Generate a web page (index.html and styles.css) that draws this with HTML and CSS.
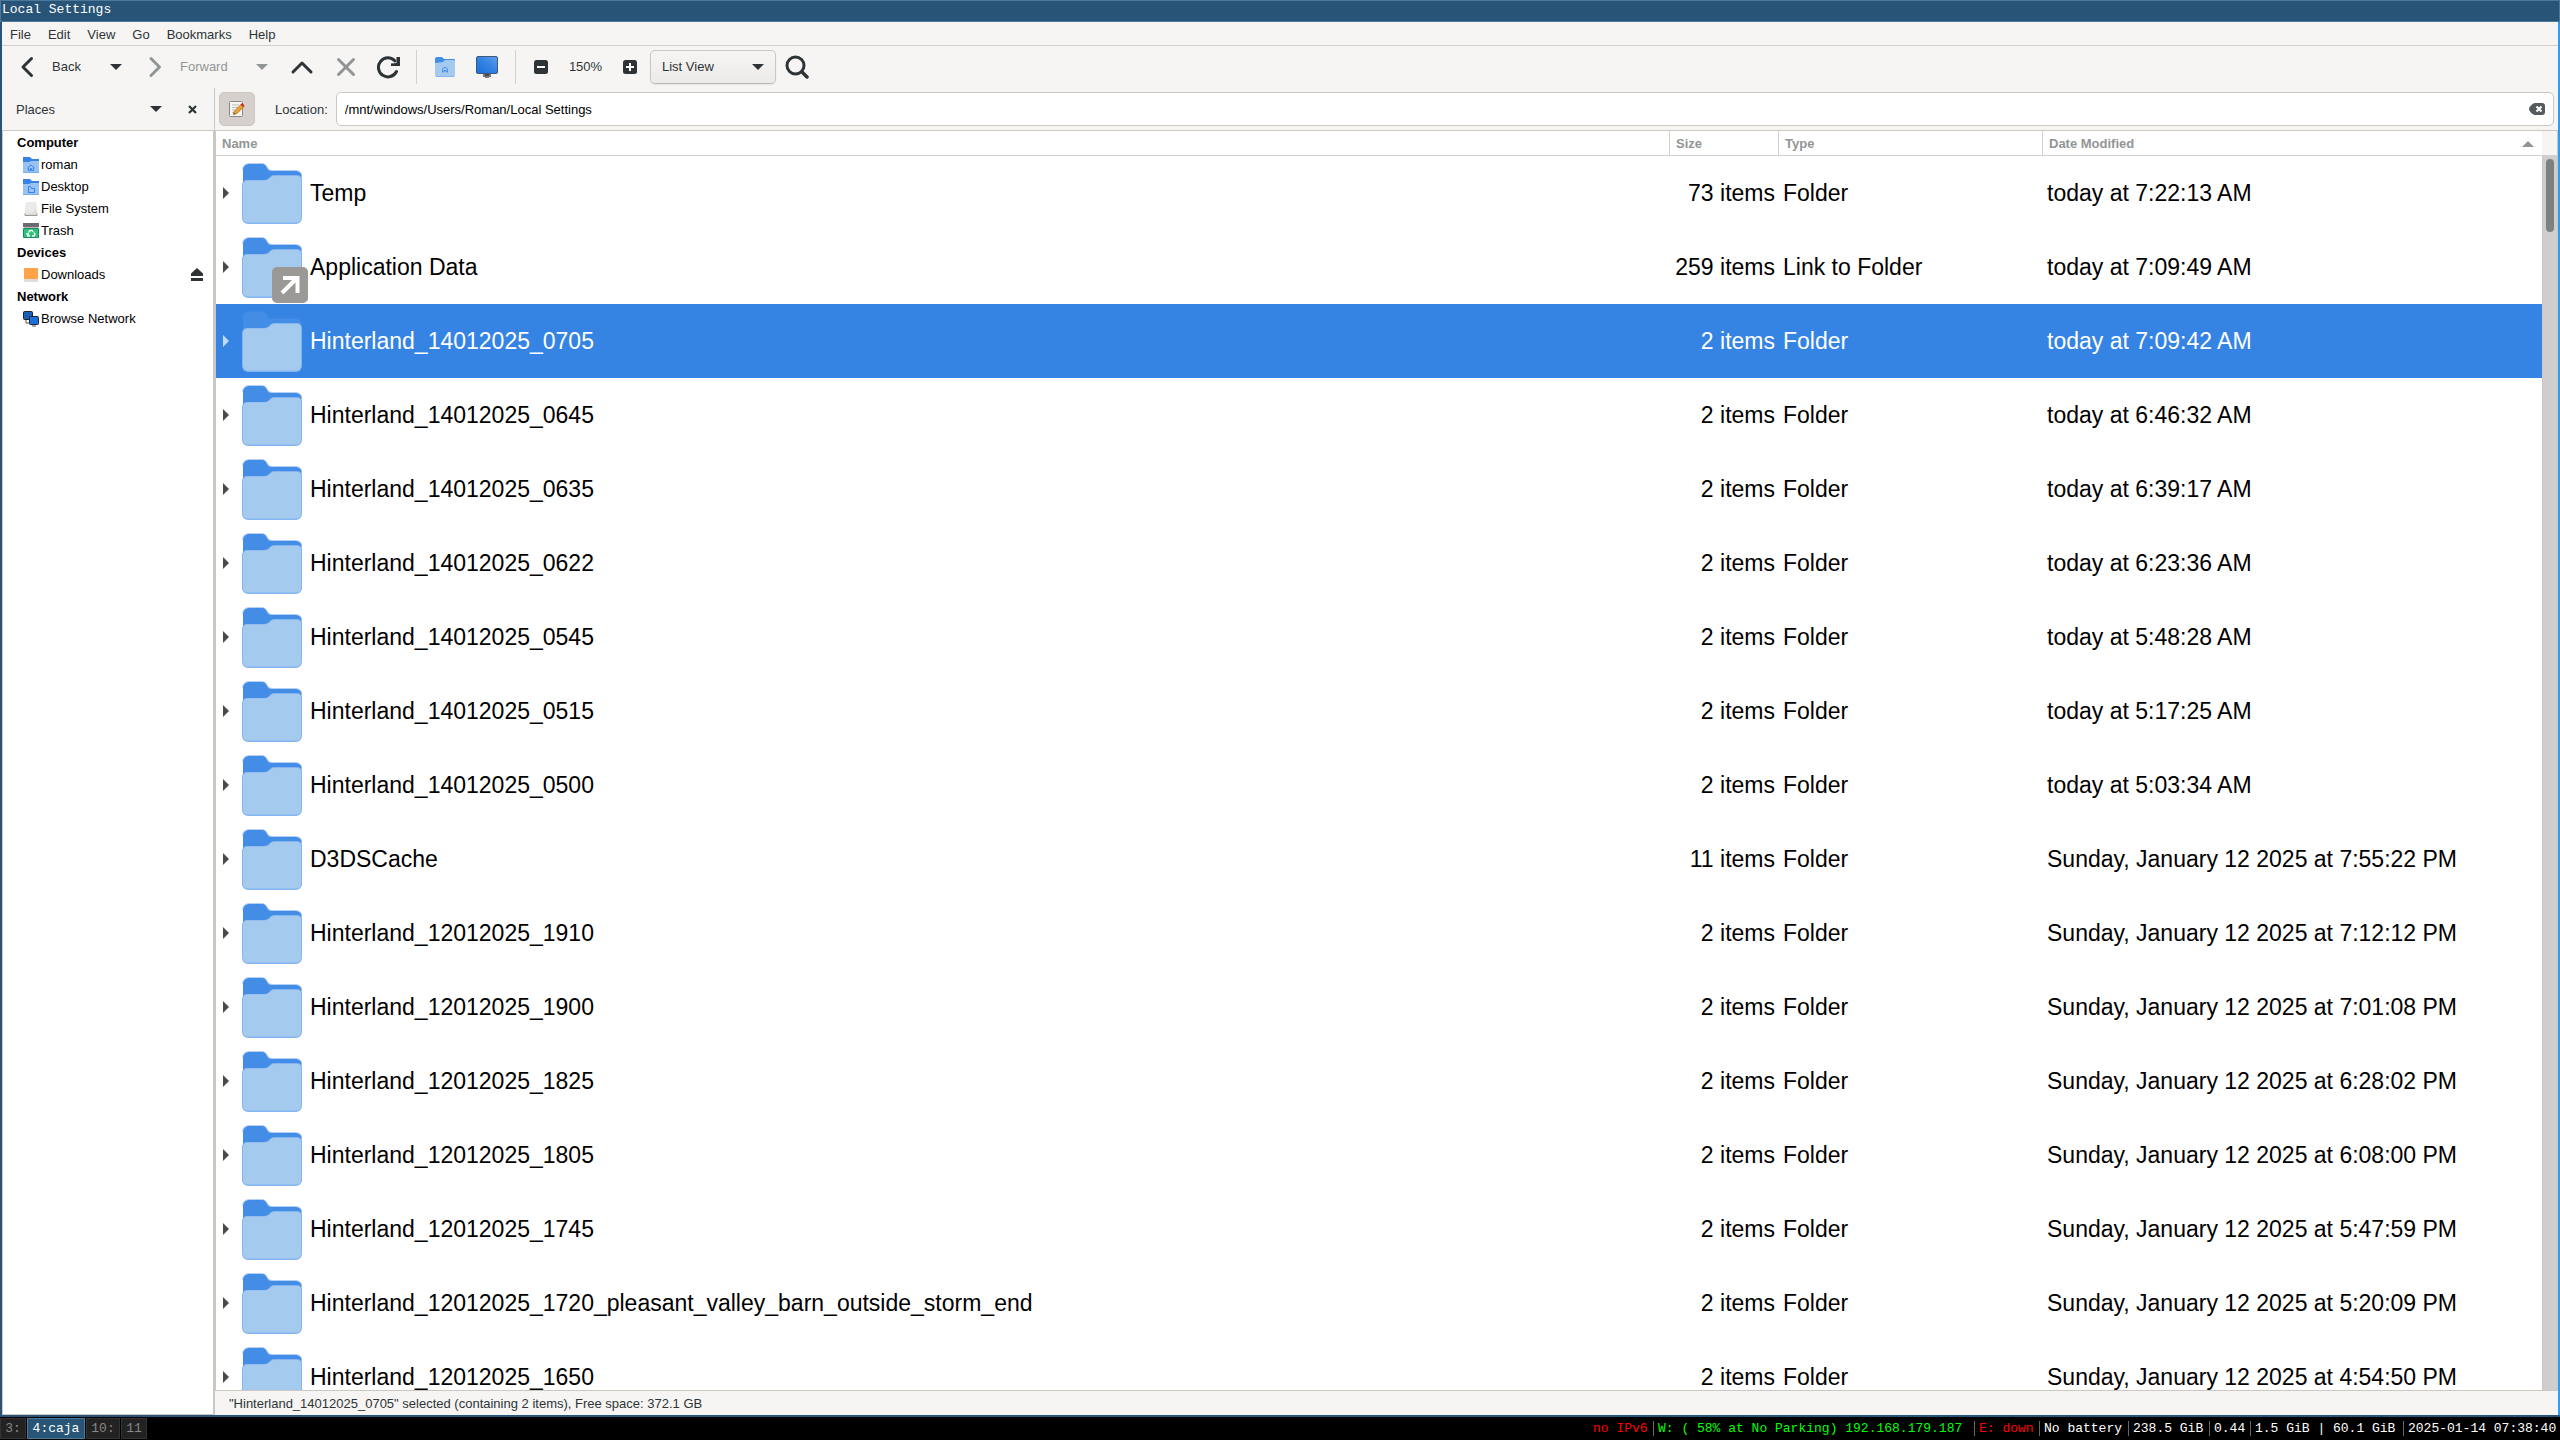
FILE: index.html
```html
<!DOCTYPE html>
<html lang="en">
<head>
<meta charset="utf-8">
<title>Local Settings</title>
<link rel="stylesheet" href="styles.css">
</head>
<body>
<svg class="defs" aria-hidden="true">
  <symbol id="folder" viewBox="0 0 60 61">
    <path d="M1 7a6 6 0 0 1 6-6h13c3 0 4 2 5 4 1 2 2 3 5 3h24a5.500 5.500 0 0 1 5.500 5.500" fill="none" stroke="#438de6" stroke-opacity=".4" stroke-width="2"/>
    <path d="M1 7a6 6 0 0 1 6-6h13c3 0 4 2 5 4 1 2 2 3 5 3h24a5.500 5.500 0 0 1 5.500 5.500V40H1z" fill="#438de6"/>
    <path d="M0 22a5 5 0 0 1 5-5h17c3 0 4-1 5.500-2.500S30 12 32 12h23a5 5 0 0 1 5 5v38a6 6 0 0 1-6 6H6a6 6 0 0 1-6-6z" fill="#84b5f0"/>
    <path d="M1 22a4.500 4.500 0 0 1 4.500-4.500H22c3 0 4.500-1 6-2.500s2.500-2 4-2h23a4 4 0 0 1 4 4v38a5 5 0 0 1-5 4.500H6A5 5 0 0 1 1 55z" fill="#a4caee"/>
  </symbol>
  <symbol id="tri" viewBox="0 0 12 6"><path d="M0 0h12L6 6z" fill="currentColor"/></symbol>
  <symbol id="expand" viewBox="0 0 6 12"><path d="M0 0l6 6-6 6z" fill="currentColor"/></symbol>
</svg>

<div class="window">
  <header class="titlebar">Local Settings</header>

  <nav class="menubar" aria-label="Menu">
    <button>File</button><button>Edit</button><button>View</button><button>Go</button><button>Bookmarks</button><button>Help</button>
  </nav>

  <div class="toolbar" role="toolbar">
    <button class="nav-btn"><svg width="20" height="22" viewBox="0 0 20 22"><path d="M14.500 2.500L6 11l8.500 8.500" class="stroke"/></svg><span>Back</span></button>
    <button class="drop-btn" aria-label="Back history"><svg width="12" height="6"><use href="#tri"/></svg></button>
    <button class="nav-btn forward" disabled><svg width="20" height="22" viewBox="0 0 20 22"><path d="M6 2.500l8.500 8.500L6 19.500" class="stroke"/></svg><span>Forward</span></button>
    <button class="drop-btn" disabled aria-label="Forward history"><svg width="12" height="6"><use href="#tri"/></svg></button>
    <button class="icon-btn up" aria-label="Up"><svg width="24" height="24" viewBox="0 0 24 24"><path d="M3 17l9-9 9 9" class="stroke"/></svg></button>
    <button class="icon-btn" disabled aria-label="Stop"><svg width="24" height="24" viewBox="0 0 24 24"><path d="M4.500 4.500l15 15m0-15l-15 15" class="stroke"/></svg></button>
    <button class="icon-btn" aria-label="Reload"><svg width="24" height="24" viewBox="0 0 24 24"><path d="M20.500 16.500a9.500 9.500 0 1 1-1.500-10.500" class="stroke"/><path d="M24 2v9h-9v-2.500L20.500 8V2z" fill="currentColor"/></svg></button>
    <span class="sep"></span>
    <button class="icon-btn" aria-label="Home"><svg width="20" height="20" viewBox="0 0 20 20"><path d="M0 2a2 2 0 0 1 2-2h5l2 2h10a1 1 0 0 1 1 1v5H0z" fill="#438de6"/><path d="M0 6l8-1 2-2h8a2 2 0 0 1 2 1v14a2 2 0 0 1-2 2H2a2 2 0 0 1-2-2z" fill="#a4caee"/><path d="M1 19.500h18" stroke="#84b5f0"/><path d="M7 12.500l3-2.500 3 2.500M7.500 12.500v2.500h1.500v-1.500h2v1.500h1.500v-2.500" fill="none" stroke="#438de6"/></svg></button>
    <button class="icon-btn" aria-label="Computer"><svg width="22" height="22" viewBox="0 0 22 22"><defs><linearGradient id="scr" x1="0" y1="1" x2="1" y2="0"><stop offset="0" stop-color="#1a6fdc"/><stop offset=".55" stop-color="#3584e4"/><stop offset="1" stop-color="#62a0ea"/></linearGradient></defs><path d="M7 17h8v4h-2v1H9v-1H7z" fill="#77767b"/><path d="M9 18h4v2H9z" fill="#4c4a50"/><rect x=".5" y=".5" width="21" height="17" rx="1.500" fill="url(#scr)" stroke="#3d5878"/></svg></button>
    <span class="sep"></span>
    <button class="icon-btn zoom-btn" aria-label="Zoom out"><svg width="14" height="14" viewBox="0 0 14 14"><rect width="14" height="14" rx="2.500" fill="#2e3436"/><path d="M3 7h8" stroke="#fff" stroke-width="2"/></svg></button>
    <button class="zoom-value">150%</button>
    <button class="icon-btn zoom-btn" aria-label="Zoom in"><svg width="14" height="14" viewBox="0 0 14 14"><rect width="14" height="14" rx="2.500" fill="#2e3436"/><path d="M3 7h8M7 3v8" stroke="#fff" stroke-width="2"/></svg></button>
    <div class="view-select">
      <select aria-label="View"><option>List View</option><option>Icon View</option><option>Compact View</option></select>
      <svg width="12" height="6"><use href="#tri"/></svg>
    </div>
    <button class="icon-btn search" aria-label="Search"><svg width="24" height="24" viewBox="0 0 24 24"><circle cx="10.500" cy="10.500" r="8.500" fill="none" stroke="currentColor" stroke-width="3"/><path d="M17 17l5 5" stroke="currentColor" stroke-width="3.500" stroke-linecap="round"/></svg></button>
  </div>

  <div class="panes">
    <aside class="sidebar">
      <div class="side-head">
        <span class="side-title">Places</span>
        <button class="drop-btn" aria-label="Choose side pane"><svg width="12" height="6"><use href="#tri"/></svg></button>
        <button class="close-btn" aria-label="Close side pane"><svg width="9" height="9" viewBox="0 0 9 9"><path d="M1 1l7 7m0-7L1 8" stroke="currentColor" stroke-width="2.200"/></svg></button>
      </div>
      <div class="places">
        <h2>Computer</h2>
        <a href="#"><svg width="16" height="16" viewBox="0 0 16 16"><path d="M0 0h7l2 2h7v6H0z" fill="#3584e4"/><path d="M0 5h6l2-1h8v12H0z" fill="#99c1f1"/><path d="M0 15.500h16" stroke="#78aeed"/><path d="M4.500 11L8 8l3.500 3M5.500 10.500v3h2v-2h1v2h2v-3" fill="none" stroke="#3584e4"/></svg>roman</a>
        <a href="#"><svg width="16" height="16" viewBox="0 0 16 16"><path d="M0 0h7l2 2h7v6H0z" fill="#3584e4"/><path d="M0 5h6l2-1h8v12H0z" fill="#99c1f1"/><path d="M0 15.500h16" stroke="#78aeed"/><path d="M5.500 7.500h2l1 2h3v4h-6z" fill="none" stroke="#3584e4"/></svg>Desktop</a>
        <a href="#"><svg width="16" height="16" viewBox="0 0 16 16"><path d="M3 1h10l1 12v1.500H2V13z" fill="#deddda"/><path d="M3 1h10l.5 7-5 4-6 1z" fill="#ebeae8"/><path d="M2 12.500v2h12v-2" fill="none" stroke="#9a9996"/></svg>File System</a>
        <a href="#"><svg width="16" height="16" viewBox="0 0 16 16"><path d="M0 0h16v4H0z" fill="#6c6a70"/><path d="M1 4h14v2H1z" fill="#c0bfbc"/><path d="M.5 5.500h15v9h-15z" fill="#2ec27e" stroke="#1c8a58"/><path d="M5.500 9.500L7 7.500h2l1 1.500M11 9.500l1 2-1 1.500H9M7 13H5l-1-2h2" fill="none" stroke="#fff" stroke-width="1.300"/></svg>Trash</a>
        <h2>Devices</h2>
        <a href="#"><svg width="16" height="16" viewBox="0 0 16 16"><rect x="1" y="1" width="14" height="14" rx="1.500" fill="#deddda"/><rect x="1" y="1" width="14" height="11" rx="1" fill="#ffa348"/></svg>Downloads<svg class="eject" width="12" height="14" viewBox="0 0 12 14"><path d="M6 0l6 5.500V8H0V5.500zM0 10h12v3H0z" fill="#2e3436"/></svg></a>
        <h2>Network</h2>
        <a href="#"><svg width="16" height="16" viewBox="0 0 16 16"><path d="M3 9v3h3M9 15h4" stroke="#555" fill="none"/><rect x=".5" y=".5" width="9" height="8" rx="1" fill="#1a5fb4" stroke="#241f31"/><rect x="6.500" y="5.500" width="9" height="8" rx="1" fill="#1c71d8" stroke="#241f31"/></svg>Browse Network</a>
      </div>
    </aside>

    <main class="main">
      <div class="location">
        <button class="toggle" aria-label="Edit location"><svg width="16" height="16" viewBox="0 0 16 16"><rect x=".5" y=".5" width="13" height="15" rx="1" fill="#f6f6f4" stroke="#888a85"/><path d="M3 4h7M3 6.500h6M3 9h3M3 11.500h2" stroke="#babdb6"/><path d="M4.500 13.500l1-3.500 7-7 2.500 2.500-7 7z" fill="#f0a030" stroke="#a06010" stroke-width=".7"/><path d="M11.500 3.500l1.500-1.500 2.500 2.500-1.500 1.500z" fill="#cc2222"/><path d="M4.500 13.500l.5-1.500 1 1z" fill="#222"/></svg></button>
        <label for="loc">Location:</label>
        <div class="loc-field">
          <input id="loc" type="text" value="/mnt/windows/Users/Roman/Local Settings">
          <button aria-label="Clear"><svg width="16" height="12" viewBox="0 0 16 12"><path d="M5.500 0H13a3 3 0 0 1 3 3v6a3 3 0 0 1-3 3H5.500C3 11 0 8 0 6s3-5 5.500-6z" fill="#555b5d"/><path d="M7.500 3.500l5 5m0-5l-5 5" stroke="#fff" stroke-width="2"/></svg></button>
        </div>
      </div>

      <div class="listview">
        <div class="scroller">
          <table>
            <colgroup><col><col class="c-size"><col class="c-type"><col class="c-date"></colgroup>
            <thead><tr><th>Name</th><th>Size</th><th>Type</th><th><div class="sorted">Date Modified<svg width="12" height="6" viewBox="0 0 12 6"><path d="M0 6h12L6 0z" fill="currentColor"/></svg></div></th></tr></thead>
            <tbody>
              <tr><td><div class="name"><svg class="exp"><use href="#expand"/></svg><svg class="folder"><use href="#folder"/></svg>Temp</div></td><td>73 items</td><td>Folder</td><td>today at 7:22:13 AM</td></tr>
              <tr><td><div class="name"><svg class="exp"><use href="#expand"/></svg><svg class="folder"><use href="#folder"/></svg><svg class="emblem" viewBox="0 0 36 36"><rect width="36" height="36" rx="5" fill="#9a9996"/><path d="M10 26L25 11M11 11h14.500v15" fill="none" stroke="#fff" stroke-width="4"/></svg>Application Data</div></td><td>259 items</td><td>Link to Folder</td><td>today at 7:09:49 AM</td></tr>
              <tr class="selected"><td><div class="name"><svg class="exp"><use href="#expand"/></svg><svg class="folder"><use href="#folder"/></svg>Hinterland_14012025_0705</div></td><td>2 items</td><td>Folder</td><td>today at 7:09:42 AM</td></tr>
              <tr><td><div class="name"><svg class="exp"><use href="#expand"/></svg><svg class="folder"><use href="#folder"/></svg>Hinterland_14012025_0645</div></td><td>2 items</td><td>Folder</td><td>today at 6:46:32 AM</td></tr>
              <tr><td><div class="name"><svg class="exp"><use href="#expand"/></svg><svg class="folder"><use href="#folder"/></svg>Hinterland_14012025_0635</div></td><td>2 items</td><td>Folder</td><td>today at 6:39:17 AM</td></tr>
              <tr><td><div class="name"><svg class="exp"><use href="#expand"/></svg><svg class="folder"><use href="#folder"/></svg>Hinterland_14012025_0622</div></td><td>2 items</td><td>Folder</td><td>today at 6:23:36 AM</td></tr>
              <tr><td><div class="name"><svg class="exp"><use href="#expand"/></svg><svg class="folder"><use href="#folder"/></svg>Hinterland_14012025_0545</div></td><td>2 items</td><td>Folder</td><td>today at 5:48:28 AM</td></tr>
              <tr><td><div class="name"><svg class="exp"><use href="#expand"/></svg><svg class="folder"><use href="#folder"/></svg>Hinterland_14012025_0515</div></td><td>2 items</td><td>Folder</td><td>today at 5:17:25 AM</td></tr>
              <tr><td><div class="name"><svg class="exp"><use href="#expand"/></svg><svg class="folder"><use href="#folder"/></svg>Hinterland_14012025_0500</div></td><td>2 items</td><td>Folder</td><td>today at 5:03:34 AM</td></tr>
              <tr><td><div class="name"><svg class="exp"><use href="#expand"/></svg><svg class="folder"><use href="#folder"/></svg>D3DSCache</div></td><td>11 items</td><td>Folder</td><td>Sunday, January 12 2025 at 7:55:22 PM</td></tr>
              <tr><td><div class="name"><svg class="exp"><use href="#expand"/></svg><svg class="folder"><use href="#folder"/></svg>Hinterland_12012025_1910</div></td><td>2 items</td><td>Folder</td><td>Sunday, January 12 2025 at 7:12:12 PM</td></tr>
              <tr><td><div class="name"><svg class="exp"><use href="#expand"/></svg><svg class="folder"><use href="#folder"/></svg>Hinterland_12012025_1900</div></td><td>2 items</td><td>Folder</td><td>Sunday, January 12 2025 at 7:01:08 PM</td></tr>
              <tr><td><div class="name"><svg class="exp"><use href="#expand"/></svg><svg class="folder"><use href="#folder"/></svg>Hinterland_12012025_1825</div></td><td>2 items</td><td>Folder</td><td>Sunday, January 12 2025 at 6:28:02 PM</td></tr>
              <tr><td><div class="name"><svg class="exp"><use href="#expand"/></svg><svg class="folder"><use href="#folder"/></svg>Hinterland_12012025_1805</div></td><td>2 items</td><td>Folder</td><td>Sunday, January 12 2025 at 6:08:00 PM</td></tr>
              <tr><td><div class="name"><svg class="exp"><use href="#expand"/></svg><svg class="folder"><use href="#folder"/></svg>Hinterland_12012025_1745</div></td><td>2 items</td><td>Folder</td><td>Sunday, January 12 2025 at 5:47:59 PM</td></tr>
              <tr><td><div class="name"><svg class="exp"><use href="#expand"/></svg><svg class="folder"><use href="#folder"/></svg>Hinterland_12012025_1720_pleasant_valley_barn_outside_storm_end</div></td><td>2 items</td><td>Folder</td><td>Sunday, January 12 2025 at 5:20:09 PM</td></tr>
              <tr><td><div class="name"><svg class="exp"><use href="#expand"/></svg><svg class="folder"><use href="#folder"/></svg>Hinterland_12012025_1650</div></td><td>2 items</td><td>Folder</td><td>Sunday, January 12 2025 at 4:54:50 PM</td></tr>
            </tbody>
          </table>
        </div>
        <div class="scrollbar"><div class="corner"></div><div class="track"><div class="thumb"></div></div></div>
      </div>

      <footer class="status">"Hinterland_14012025_0705" selected (containing 2 items), Free space: 372.1 GB</footer>
    </main>
  </div>
</div>

<div class="bar">
  <div class="workspaces"><button class="ws-s">3:</button><button class="ws-l active">4:caja</button><button class="ws-m">10:</button><button class="ws-s">11</button></div>
  <div class="blocks">
    <span class="bad b-ip">no IPv6</span><span class="good b-wifi">W: ( 58% at No Parking) 192.168.179.187</span><span class="bad b-eth">E: down</span><span class="b-bat">No battery</span><span class="b-disk">238.5 GiB</span><span class="b-load">0.44</span><span class="b-mem">1.5 GiB | 60.1 GiB</span><span class="b-date">2025-01-14 07:38:40</span>
  </div>
</div>
</body>
</html>
```
FILE: styles.css
```css
* { box-sizing: border-box; }

body {
  margin: 0;
  height: 100vh;
  display: flex;
  flex-direction: column;
  overflow: hidden;
  background: #000;
  color: #2e3436;
  font: 13px/22px "Liberation Sans", Arial, sans-serif;
}

button, input, select { font: inherit; color: inherit; margin: 0; }
button { display: flex; align-items: center; justify-content: center; padding: 0; border: 0; background: none; }
button:disabled { color: #929595; }
svg { display: block; flex: none; }
.defs { position: absolute; width: 0; height: 0; }
.stroke { fill: none; stroke: currentColor; stroke-width: 3; stroke-linecap: round; stroke-linejoin: round; }

.window {
  flex: 1;
  min-height: 0;
  display: flex;
  flex-direction: column;
  background: #f6f5f4;
  border-bottom: 2px solid #285577;
}

.titlebar {
  height: 22px;
  padding-left: 1px;
  border: 1px solid #4c7899;
  background: #285577;
  color: #fff;
  font: 13px/18px "Liberation Mono", "Courier New", monospace;
}

.menubar, .toolbar, .panes { border-left: 2px solid #285577; border-right: 2px solid #2e9ef4; }

.menubar { display: flex; gap: 17px; height: 24px; padding: 2px 0 0 8px; box-shadow: inset 0 -1px #d5d0cc; }

.toolbar { display: flex; align-items: center; height: 42px; padding: 4px 0; }
.nav-btn { height: 34px; width: 97px; gap: 15px; padding-left: 15px; justify-content: flex-start; }
.nav-btn.forward { width: 112px; padding-left: 12px; }
.drop-btn { width: 34px; height: 34px; }
.icon-btn { width: 42px; height: 34px; }
.icon-btn.up { width: 46px; }
.sep { width: 1px; height: 34px; margin: 0 7px; background: #d5d0cc; }
.zoom-btn { width: 36px; }
.zoom-value { width: 53px; }
.view-select { display: grid; align-items: center; width: 126px; height: 34px; margin-left: 2px; }
.view-select > * { grid-area: 1 / 1; }
.view-select svg { justify-self: end; margin-right: 12px; pointer-events: none; }
.view-select select {
  appearance: none;
  width: 100%;
  height: 34px;
  padding: 0 11px;
  border: 1px solid #cdc7c2;
  border-bottom-color: #bfb8b1;
  border-radius: 5px;
  background: linear-gradient(#f6f5f4, #edebe9);
  box-shadow: 0 1px 2px rgba(0, 0, 0, .07);
}

.panes { flex: 1; min-height: 0; display: flex; }

.sidebar { display: flex; flex-direction: column; width: 212px; flex: none; }
.side-head { display: flex; align-items: center; height: 42px; padding-left: 14px; }
.side-title { flex: 1; padding-top: 1px; }
.close-btn { width: 34px; height: 34px; margin-right: 5px; }
.side-head .drop-btn { width: 38px; }
.places { flex: 1; padding-top: 1px; border: 1px solid #cdc7c2; background: #fff; color: #000; }
.places h2 { margin: 0; padding-left: 14px; font: bold 13px/22px "Liberation Sans", Arial, sans-serif; }
.places a { display: flex; align-items: center; gap: 2px; padding: 0 10px 0 20px; color: inherit; text-decoration: none; }
.places .eject { margin-left: auto; }

.main { flex: 1; min-width: 0; display: flex; flex-direction: column; border-left: 1px solid #cdc7c2; }
.location { display: flex; align-items: center; height: 42px; padding: 0 4px; }
.toggle { width: 36px; height: 34px; border: 1px solid #cdc7c2; border-radius: 5px; background: #d5d0cc; }
.location label { padding: 1px 8px 0 20px; }
.loc-field {
  flex: 1;
  display: flex;
  height: 34px;
  padding: 0 8px;
  border: 1px solid #cdc7c2;
  border-radius: 5px;
  background: #fff;
  color: #000;
}
.loc-field input { flex: 1; min-width: 0; padding: 1px 0 0; border: 0; outline: 0; background: none; }

.listview { flex: 1; min-height: 0; display: flex; border: 1px solid #cdc7c2; border-right: 0; background: #fff; color: #000; }
.scroller { flex: 1; min-width: 0; overflow: hidden; }
table { width: 100%; border-collapse: separate; border-spacing: 0; table-layout: fixed; }
.c-size { width: 109px; }
.c-type { width: 264px; }
.c-date { width: 500px; }
th {
  height: 25px;
  padding: 2px 8px 0 6px;
  border-bottom: 1px solid #d5d0cc;
  border-left: 1px solid #d5d0cc;
  color: #929595;
  text-align: left;
  line-height: 22px;
}
th:first-child { border-left: 0; }
.sorted { display: flex; align-items: center; justify-content: space-between; }
td { height: 74px; padding: 0 3px 0 5px; font-size: 23px; line-height: 28px; white-space: nowrap; }
td:nth-child(2) { text-align: right; }
td:first-child { padding-left: 7px; }
.name { position: relative; display: flex; align-items: center; height: 74px; }
.exp { width: 6px; height: 12px; margin-right: 13px; color: #4a4a4a; }
.folder { width: 60px; height: 61px; margin-right: 8px; }
.emblem { position: absolute; left: 49px; bottom: 1px; width: 36px; height: 36px; }
.selected td { background: #3584e4; color: #fff; }
.selected .exp { color: #c2daf7; }

.scrollbar { display: flex; flex-direction: column; width: 16px; border-right: 1px solid #cdc7c2; }
.corner { height: 25px; background: #f6f5f4; border-bottom: 1px solid #d5d0cc; }
.track { flex: 1; padding: 3px; border-left: 1px solid #cdc7c2; background: #cecece; }
.thumb { width: 8px; height: 73px; border-radius: 4px; background: #7e8182; }

.status { height: 24px; padding: 1px 14px 0; line-height: 24px; }

.bar { display: flex; justify-content: space-between; height: 23px; color: #fff; font: 13px/19px "Liberation Mono", "Courier New", monospace; }
.workspaces { display: flex; gap: 1px; padding: 1px 0; }
.workspaces button { border: 1px solid #333; background: #222; color: #888; }
.workspaces .active { border-color: #4c7899; background: #285577; color: #fff; }
.ws-s { width: 26px; }
.ws-m { width: 34px; }
.ws-l { width: 58px; }
.blocks { display: flex; align-items: center; white-space: pre; }
.blocks span { height: 15px; padding-left: 4px; border-left: 1px solid #666; line-height: 15px; }
.blocks .bad { color: #f00; }
.blocks .good { color: #0f0; }
.blocks .b-ip { width: 60px; padding: 0; border: 0; }
.b-wifi { width: 321px; }
.b-eth { width: 65px; }
.b-bat { width: 89px; }
.b-disk { width: 81px; }
.b-load { width: 41px; }
.b-mem { width: 153px; }
.b-date { width: 157px; }
```
